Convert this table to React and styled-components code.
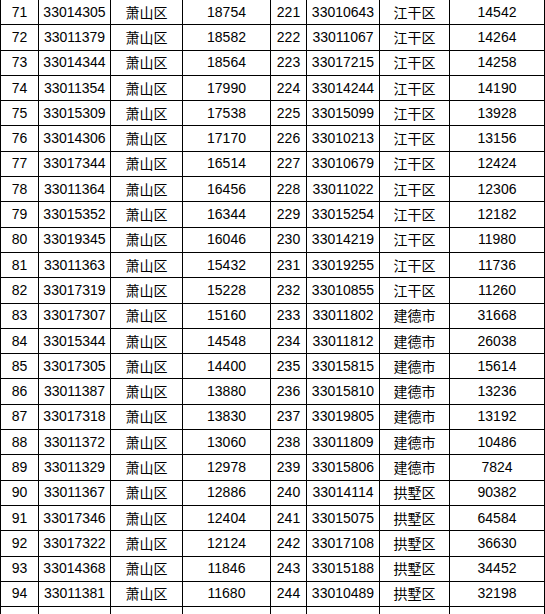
import React from "react";
import styled, { createGlobalStyle } from "styled-components";

const Global = createGlobalStyle`
  html, body { margin: 0; padding: 0; background: #fff; overflow: hidden; }
  body { font-family: "Liberation Sans", "Noto Sans CJK SC", sans-serif; }
`;

const left = [
  [71, "33014305", "萧山区", 18754],
  [72, "33011379", "萧山区", 18582],
  [73, "33014344", "萧山区", 18564],
  [74, "33011354", "萧山区", 17990],
  [75, "33015309", "萧山区", 17538],
  [76, "33014306", "萧山区", 17170],
  [77, "33017344", "萧山区", 16514],
  [78, "33011364", "萧山区", 16456],
  [79, "33015352", "萧山区", 16344],
  [80, "33019345", "萧山区", 16046],
  [81, "33011363", "萧山区", 15432],
  [82, "33017319", "萧山区", 15228],
  [83, "33017307", "萧山区", 15160],
  [84, "33015344", "萧山区", 14548],
  [85, "33017305", "萧山区", 14400],
  [86, "33011387", "萧山区", 13880],
  [87, "33017318", "萧山区", 13830],
  [88, "33011372", "萧山区", 13060],
  [89, "33011329", "萧山区", 12978],
  [90, "33011367", "萧山区", 12886],
  [91, "33017346", "萧山区", 12404],
  [92, "33017322", "萧山区", 12124],
  [93, "33014368", "萧山区", 11846],
  [94, "33011381", "萧山区", 11680],
];

const right = [
  [221, "33010643", "江干区", 14542],
  [222, "33011067", "江干区", 14264],
  [223, "33017215", "江干区", 14258],
  [224, "33014244", "江干区", 14190],
  [225, "33015099", "江干区", 13928],
  [226, "33010213", "江干区", 13156],
  [227, "33010679", "江干区", 12424],
  [228, "33011022", "江干区", 12306],
  [229, "33015254", "江干区", 12182],
  [230, "33014219", "江干区", 11980],
  [231, "33019255", "江干区", 11736],
  [232, "33010855", "江干区", 11260],
  [233, "33011802", "建德市", 31668],
  [234, "33011812", "建德市", 26038],
  [235, "33015815", "建德市", 15614],
  [236, "33015810", "建德市", 13236],
  [237, "33019805", "建德市", 13192],
  [238, "33011809", "建德市", 10486],
  [239, "33015806", "建德市", 7824],
  [240, "33014114", "拱墅区", 90382],
  [241, "33015075", "拱墅区", 64584],
  [242, "33017108", "拱墅区", 36630],
  [243, "33015188", "拱墅区", 34452],
  [244, "33010489", "拱墅区", 32198],
];

const Sheet = styled.div`
  width: 545px;
  box-sizing: border-box;
  border-left: 1px solid #000;
  color: #000;
`;

const Row = styled.div`
  display: grid;
  grid-template-columns: 38px 72px 72px 88px 36px 73px 70px 95px;
  height: 25.3px;
  box-sizing: border-box;
  border-bottom: 1px solid #000;
`;

const Cell = styled.div`
  box-sizing: border-box;
  border-right: 1px solid #000;
  display: flex;
  align-items: center;
  justify-content: center;
  font-size: ${(p) => (p.$cjk ? "14px" : "14px")};
  font-family: ${(p) =>
    p.$cjk
      ? '"Noto Sans CJK SC", sans-serif'
      : '"Liberation Sans", "Noto Sans CJK SC", sans-serif'};
  line-height: 1;
  white-space: nowrap;
  padding-bottom: 1px;
`;

export default function App() {
  const rows = left.map((l, i) => [...l, ...right[i]]);
  return (
    <>
      <Global />
      <Sheet>
        {rows.map((r) => (
          <Row key={r[0]}>
            {r.map((v, j) => (
              <Cell key={j} $cjk={j % 4 === 2}>
                {v}
              </Cell>
            ))}
          </Row>
        ))}
        <Row>
          {Array.from({ length: 8 }).map((_, j) => (
            <Cell key={j} />
          ))}
        </Row>
      </Sheet>
    </>
  );
}
